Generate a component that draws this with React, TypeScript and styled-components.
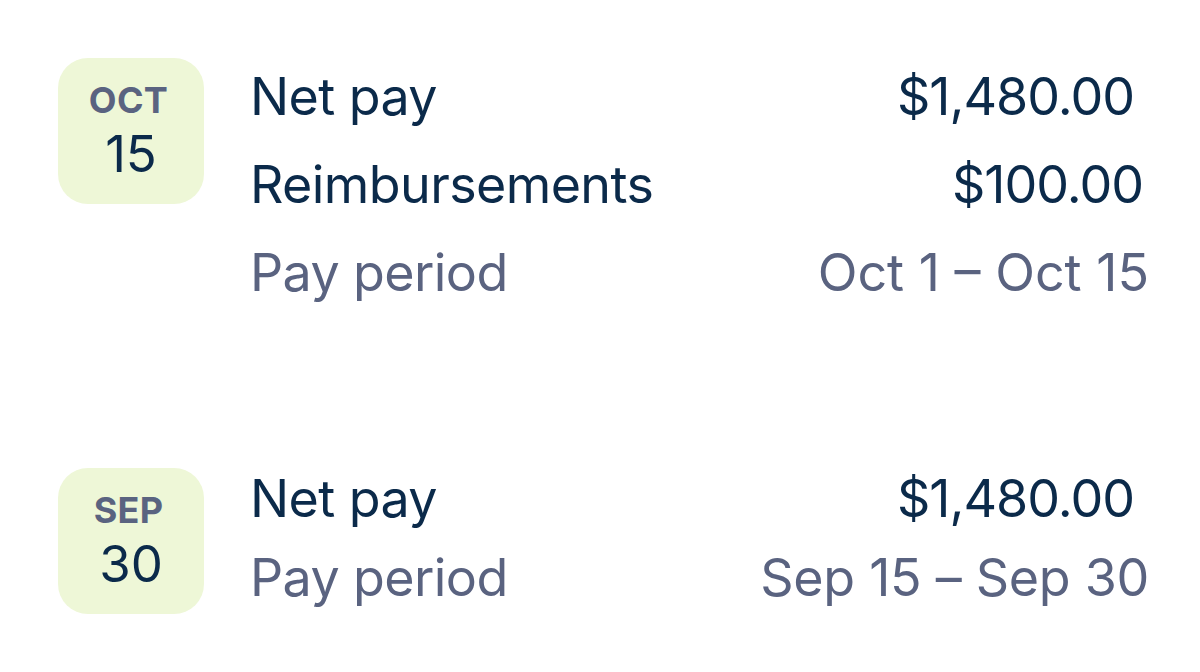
import React from "react";
import styled, { createGlobalStyle } from "styled-components";

const Global = createGlobalStyle`
  html, body { margin: 0; padding: 0; background: #ffffff; }
  body { font-family: Inter, "Noto Sans", "Liberation Sans", sans-serif; }
`;

const Page = styled.div`
  width: 1200px;
  height: 672px;
  box-sizing: border-box;
  padding: 58px 51px 0 58px;
  display: flex;
  flex-direction: column;
  gap: 164px;
  overflow: hidden;
`;

const Entry = styled.div`
  display: flex;
  align-items: flex-start;
  gap: 46px;
`;

const Badge = styled.div`
  flex: none;
  width: 146px;
  height: 146px;
  border-radius: 30px;
  background: #eef7d7;
  display: flex;
  flex-direction: column;
  align-items: center;
  justify-content: center;
`;

const Month = styled.div`
  font-size: 36px;
  font-weight: 700;
  line-height: 40px;
  color: #5a6380;
  letter-spacing: 0.3px;
  margin-left: -5px;
`;

const Day = styled.div`
  font-size: 51px;
  font-weight: 400;
  line-height: 56px;
  margin-top: 6px;
  color: #0b2a4a;
`;

const Lines = styled.div<{ $top: number; $gap: number }>`
  flex: 1;
  display: flex;
  flex-direction: column;
  gap: ${(p) => p.$gap}px;
  padding-top: ${(p) => p.$top}px;
`;

const Line = styled.div<{ $muted?: boolean }>`
  display: flex;
  justify-content: space-between;
  align-items: baseline;
  font-size: 52px;
  line-height: 62px;
  color: ${(p) => (p.$muted ? "#5a6380" : "#0b2a4a")};
`;

const Label = styled.span`
  letter-spacing: -0.6px;
`;

const Value = styled.span<{ $inset?: number; $track: number }>`
  margin-right: ${(p) => p.$inset ?? 0}px;
  letter-spacing: ${(p) => p.$track}px;
`;

type Row = { label: string; value: string; muted?: boolean; inset?: number; track: number };

const groups: { month: string; day: string; top: number; gap: number; rows: Row[] }[] = [
  {
    month: "OCT",
    day: "15",
    top: 8,
    gap: 26,
    rows: [
      { label: "Net pay", value: "$1,480.00", inset: 15, track: -1 },
      { label: "Reimbursements", value: "$100.00", inset: 6, track: -1 },
      { label: "Pay period", value: "Oct 1 – Oct 15", muted: true, track: 0 },
    ],
  },
  {
    month: "SEP",
    day: "30",
    top: 0,
    gap: 17,
    rows: [
      { label: "Net pay", value: "$1,480.00", inset: 15, track: -1 },
      { label: "Pay period", value: "Sep 15 – Sep 30", muted: true, track: -0.3 },
    ],
  },
];

export default function App() {
  return (
    <>
      <Global />
      <Page>
        {groups.map((g) => (
          <Entry key={g.month}>
            <Badge>
              <Month>{g.month}</Month>
              <Day>{g.day}</Day>
            </Badge>
            <Lines $top={g.top} $gap={g.gap}>
              {g.rows.map((r) => (
                <Line key={r.label} $muted={r.muted}>
                  <Label>{r.label}</Label>
                  <Value $inset={r.inset} $track={r.track}>
                    {r.value}
                  </Value>
                </Line>
              ))}
            </Lines>
          </Entry>
        ))}
      </Page>
    </>
  );
}
